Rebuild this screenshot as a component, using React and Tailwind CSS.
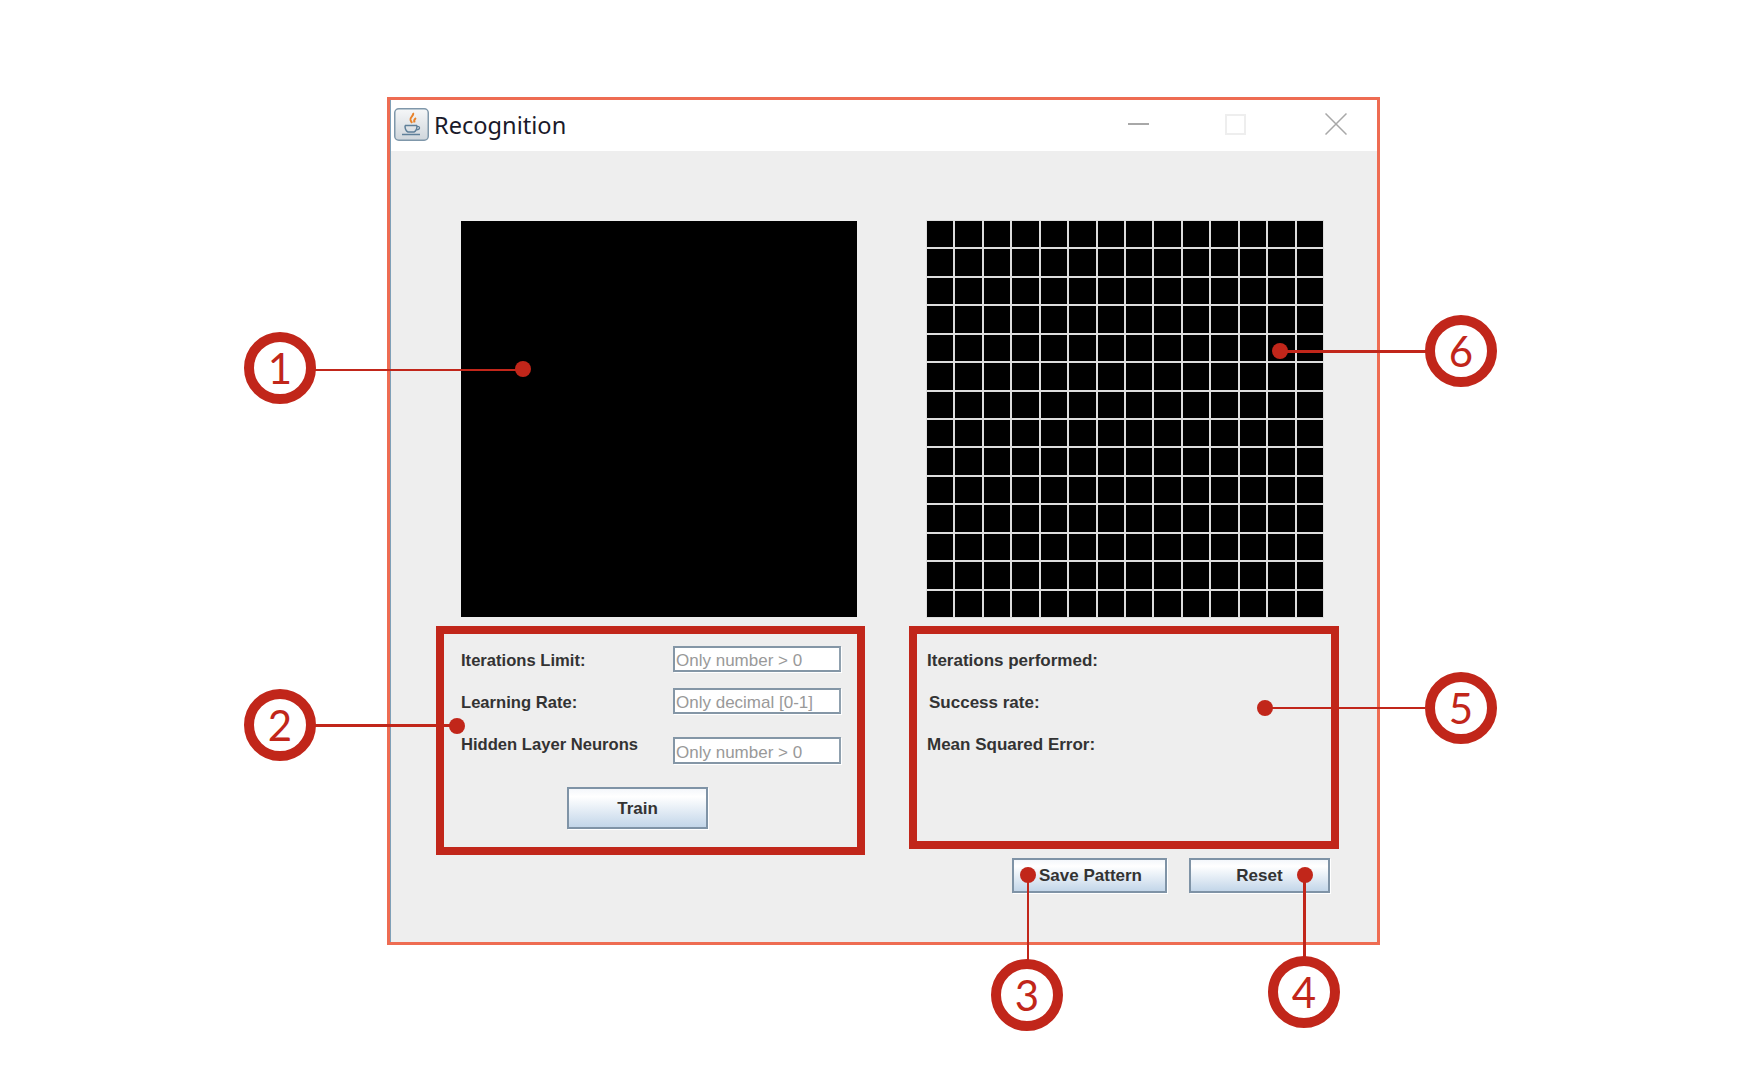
import React from "react";

const cells = Array.from({ length: 196 });

const callouts = [
  { n: "1", cx: 280, cy: 368 },
  { n: "2", cx: 280, cy: 725 },
  { n: "3", cx: 1027, cy: 995 },
  { n: "4", cx: 1304, cy: 992 },
  { n: "5", cx: 1461, cy: 708 },
  { n: "6", cx: 1461, cy: 351 },
];

const dots = [
  { x: 523, y: 369 },
  { x: 457, y: 726 },
  { x: 1028, y: 875 },
  { x: 1305, y: 875 },
  { x: 1265, y: 708 },
  { x: 1280, y: 351 },
];

// leader lines, x/y/w/h in page pixels
const lines = [
  { x: 314, y: 369, w: 209, h: 2 },
  { x: 314, y: 724, w: 143, h: 3 },
  { x: 1027, y: 875, w: 2, h: 86 },
  { x: 1303, y: 875, w: 3, h: 83 },
  { x: 1265, y: 707, w: 160, h: 2 },
  { x: 1280, y: 350, w: 146, h: 3 },
];

const JavaIcon = () => (
  <svg width="35" height="33" viewBox="0 0 35 33">
    <defs>
      <linearGradient id="tile" x1="0" y1="0" x2="0" y2="1">
        <stop offset="0" stopColor="#f6f7f8" />
        <stop offset="1" stopColor="#cfd6dc" />
      </linearGradient>
    </defs>
    <rect x="0.75" y="0.75" width="33.5" height="31.5" rx="4" fill="url(#tile)" stroke="#7f97aa" strokeWidth="1.5" />
    <path d="M19 5c1.500 2.500-3.500 4-2.500 7 .4 1 1 2 1.500 3M22 10c-1.500 1-2.500 2-1.500 4.500" fill="none" stroke="#e8822a" strokeWidth="2" />
    <path d="M11 17.500h12M11 17.500c0 3 .5 5.500 3 6.500h6c2.500-1 3-3.500 3-6.500" fill="none" stroke="#5e7f99" strokeWidth="1.500" />
    <path d="M23 18.500c3.500-.5 3.500 3-.5 3.500" fill="none" stroke="#5e7f99" strokeWidth="1.200" />
    <path d="M8 26.500h18" stroke="#5e7f99" strokeWidth="1.500" />
  </svg>
);

const Field = ({ placeholder }) => (
  <input
    readOnly
    placeholder={placeholder}
    className="w-[168px] h-full bg-white border-2 border-[#8496a6] border-r-[#8fa0ae] px-[1px] pt-[4px] text-[17px] placeholder:text-[#999999] shadow-[1px_1px_0_#ffffff] outline-none"
  />
);

const JavaButton = ({ children, className }) => (
  <button
    className={`flex items-center justify-center bg-gradient-to-b from-[#f4f7fb] via-[#ffffff] via-20% to-[#c3d6e9] border-2 border-[#7f93a6] shadow-[1px_1px_0_#ffffff] font-bold text-[17px] text-[#333333] ${className}`}
  >
    {children}
  </button>
);

const Label = ({ children, className = "" }) => (
  <span className={`block font-bold leading-[20px] text-[#333333] ${className}`}>{children}</span>
);

export default function App() {
  return (
    <div className="relative w-[1760px] h-[1070px] bg-white overflow-hidden font-['Liberation_Sans',sans-serif]">
      <div className="absolute left-[387px] top-[97px] w-[993px] h-[848px] border-[3px] border-[#ee6c52] flex flex-col">
        <div className="h-[51px] bg-white flex items-center border-l border-[#7fa0b8] shrink-0">
          <div className="ml-[3px] mt-[-3px]">
            <JavaIcon />
          </div>
          <span className="ml-[5px] text-[23.6px] text-[#1a1a2a] font-['Noto_Sans',sans-serif]">Recognition</span>
          <div className="ml-auto flex items-center mr-[30px] mt-[-3px]">
            <div className="w-[21px] h-[2px] bg-[#a8a8a8]" />
            <div className="w-[21px] h-[21px] ml-[76px] border-2 border-[#eeeeee]" />
            <svg className="ml-[79px]" width="22" height="22" viewBox="0 0 22 22">
              <path d="M0.500 0.500L21.500 21.500M21.500 0.500L0.500 21.500" stroke="#a8a8a8" strokeWidth="1.500" />
            </svg>
          </div>
        </div>

        <div className="flex-1 bg-[#eeeeee] border-l border-[#7fa0b8] pl-[45px] pt-[70px] flex gap-[44px]">
          <div className="w-[429px]">
            <div className="ml-[25px] w-[396px] h-[396px] bg-black" />
            <div className="mt-[9px] h-[229px] border-[8px] border-[#c1261a] pl-[17px] pr-[16px] pt-[12px]">
              <div className="flex justify-between items-start h-[26px]">
                <Label className="mt-[5px] text-[16.6px]">Iterations Limit:</Label>
                <Field placeholder="Only number > 0" />
              </div>
              <div className="flex justify-between items-start h-[26px] mt-[16px]">
                <Label className="mt-[5px] text-[16.6px]">Learning Rate:</Label>
                <Field placeholder="Only decimal [0-1]" />
              </div>
              <div className="flex justify-between items-start h-[27px] mt-[23px]">
                <Label className="mt-[-2px] text-[16.6px]">Hidden Layer Neurons</Label>
                <Field placeholder="Only number > 0" />
              </div>
              <JavaButton className="w-[141px] h-[42px] mt-[23px] ml-[106px] pt-[2px]">Train</JavaButton>
            </div>
          </div>

          <div className="w-[430px]">
            <div className="ml-[17px] mt-[-1px] mb-[-1px] w-[398px] h-[398px] grid grid-cols-[repeat(14,1fr)] grid-rows-[repeat(14,1fr)]">
              {cells.map((_, i) => (
                <div key={i} className="bg-black border border-[#dddddd]" />
              ))}
            </div>
            <div className="mt-[9px] h-[223px] border-[8px] border-[#c1261a] pl-[10px] pt-[17px]">
              <Label className="text-[17px]">Iterations performed:</Label>
              <Label className="mt-[22px] ml-[2px] text-[17px]">Success rate:</Label>
              <Label className="mt-[22px] text-[17px]">Mean Squared Error:</Label>
            </div>
            <div className="flex gap-[22px] mt-[9px] ml-[103px]">
              <JavaButton className="w-[155px] h-[35px] pl-[2px]">Save Pattern</JavaButton>
              <JavaButton className="w-[141px] h-[35px]">Reset</JavaButton>
            </div>
          </div>
        </div>
      </div>

      {lines.map((l, i) => (
        <div
          key={i}
          className="absolute bg-[#c1261a]"
          style={{ left: l.x, top: l.y, width: l.w, height: l.h }}
        />
      ))}
      {dots.map((d, i) => (
        <div
          key={i}
          className="absolute w-4 h-4 rounded-full bg-[#c1261a]"
          style={{ left: d.x - 8, top: d.y - 8 }}
        />
      ))}
      {callouts.map((c) => (
        <div
          key={c.n}
          className="absolute w-[72px] h-[72px] rounded-full bg-white border-[10px] border-[#c1261a] flex items-center justify-center text-[42px] leading-none text-[#c1261a] font-['Lato',sans-serif]"
          style={{ left: c.cx - 36, top: c.cy - 36 }}
        >
          {c.n}
        </div>
      ))}
    </div>
  );
}
